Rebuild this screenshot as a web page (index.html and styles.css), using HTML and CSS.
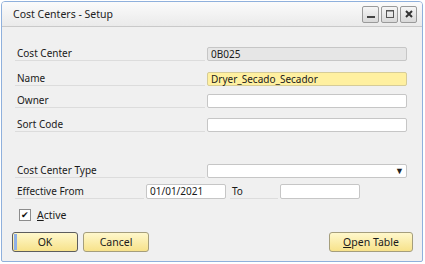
FILE: index.html
```html
<!DOCTYPE html>
<html lang="en">
<head>
  <meta charset="UTF-8">
  <title>Cost Centers - Setup</title>
  <link rel="stylesheet" href="styles.css">
</head>
<body>

<div class="window">
  <div class="titlebar">
    <span class="title">Cost Centers - Setup</span>
    <div class="wbtns">
      <span class="wbtn"><svg width="14" height="14" viewBox="0 0 14 14"><rect x="3" y="9" width="8" height="2" fill="#444"/></svg></span>
      <span class="wbtn"><svg width="14" height="14" viewBox="0 0 14 14"><rect x="3.5" y="3.5" width="7" height="7" fill="none" stroke="#555" stroke-width="1"/><rect x="3" y="3" width="8" height="1.5" fill="#555"/></svg></span>
      <span class="wbtn"><svg width="14" height="14" viewBox="0 0 14 14"><path d="M4 4 L10 10 M10 4 L4 10" stroke="#333" stroke-width="2"/></svg></span>
    </div>
  </div>

  <div class="content">
    <div class="row r1">
      <span class="label">Cost Center</span>
      <span class="field gray">0B025</span>
    </div>
    <div class="row r2">
      <span class="label">Name</span>
      <span class="field yellow">Dryer_Secado_Secador</span>
    </div>
    <div class="row r3">
      <span class="label">Owner</span>
      <span class="field"></span>
    </div>
    <div class="row r4">
      <span class="label">Sort Code</span>
      <span class="field"></span>
    </div>
    <div class="row r5">
      <span class="label">Cost Center Type</span>
      <span class="field select"><span class="arrow">&#9660;</span></span>
    </div>
    <div class="row r6">
      <span class="label short">Effective From</span>
      <span class="field date">01/01/2021</span>
      <span class="label to">To</span>
      <span class="field date"></span>
    </div>
    <div class="check-row">
      <span class="checkbox">&#10004;</span>
      <span class="check-label"><u>A</u>ctive</span>
    </div>
    <div class="buttons">
      <button class="btn default"><span class="focus"></span>OK</button>
      <button class="btn">Cancel</button>
      <span class="spacer"></span>
      <button class="btn wide"><u>O</u>pen Table</button>
    </div>
  </div>
</div>

</body>
</html>
```

FILE: styles.css
```css
body {
  margin: 0;
  background: #ffffff;
  font-family: "Noto Sans", "Liberation Sans", sans-serif;
  font-size: 10px;
  color: #1a1a1a;
}
.window {
  margin: 1px;
  width: 420px;
  height: 259px;
  border: 1px solid #8fb0dc;
  border-radius: 4px 4px 2px 2px;
  background: #f0f0f0;
  overflow: hidden;
}
.titlebar {
  height: 24px;
  display: flex;
  align-items: center;
  justify-content: space-between;
  padding: 0 4px 0 11px;
  background: linear-gradient(#fbfbfb, #eaeaea);
  border-bottom: 1px solid #c9c9c9;
}
.title {
  font-size: 10.5px;
  color: #222;
}
.wbtns {
  display: flex;
  gap: 2px;
  margin-right: 1px;
}
.wbtn {
  width: 15px;
  height: 15px;
  border: 1px solid #9a9a9a;
  border-radius: 2px;
  background: linear-gradient(#f6f6f6, #d9d9d9);
  display: flex;
  align-items: center;
  justify-content: center;
}
.content {
  padding: 0 0 0 13px;
}
.row {
  display: flex;
  align-items: flex-end;
  height: 14px;
}
.r1 { margin-top: 20px; }
.r2 { margin-top: 11px; }
.r3 { margin-top: 8px; }
.r4 { margin-top: 10px; }
.r5 { margin-top: 32px; }
.r6 { margin-top: 7px; }
.label {
  box-sizing: border-box;
  width: 190px;
  padding-left: 2px;
  border-bottom: 1px solid #dcdcdc;
  line-height: 13px;
}
.label.short {
  width: 129px;
}
.label.to {
  width: 48px;
  margin-left: 4px;
}
.field {
  box-sizing: border-box;
  width: 200px;
  height: 14px;
  margin-left: 2px;
  padding-left: 3px;
  border: 1px solid #c6c6c6;
  border-radius: 2px;
  background: #fff;
  line-height: 12px;
  position: relative;
}
.field.gray {
  background: #e6e6e6;
}
.field.yellow {
  background: #fff0a0;
  border-color: #d6cc98;
}
.field.date {
  width: 80px;
  height: 15px;
}
.arrow {
  position: absolute;
  right: 2px;
  top: 0;
  font-size: 9px;
  color: #222;
}
.check-row {
  display: flex;
  align-items: center;
  margin-top: 9px;
  margin-left: 4px;
  gap: 6px;
}
.checkbox {
  box-sizing: border-box;
  width: 12px;
  height: 12px;
  border: 1px solid #8c8c8c;
  background: #fff;
  font-size: 9px;
  line-height: 10px;
  text-align: center;
  color: #111;
}
.check-label {
  font-size: 10.5px;
}
.buttons {
  display: flex;
  margin-top: 10px;
  margin-left: -3px;
  padding-right: 9px;
  gap: 5px;
}
.spacer {
  flex: 1;
}
.btn {
  position: relative;
  width: 66px;
  height: 20px;
  border: 1px solid #a59e7c;
  border-radius: 3px;
  background: linear-gradient(#fff8cc, #f7e28a);
  font-family: "Noto Sans", "Liberation Sans", sans-serif;
  font-size: 10.5px;
  color: #1a1a1a;
  padding: 0;
}
.btn.default {
  border-color: #5d5d5d;
  overflow: hidden;
}
.btn.wide {
  width: 84px;
}
.focus {
  position: absolute;
  left: 1px;
  top: 1px;
  bottom: 1px;
  width: 3px;
  background: #8fb0e6;
}
```
